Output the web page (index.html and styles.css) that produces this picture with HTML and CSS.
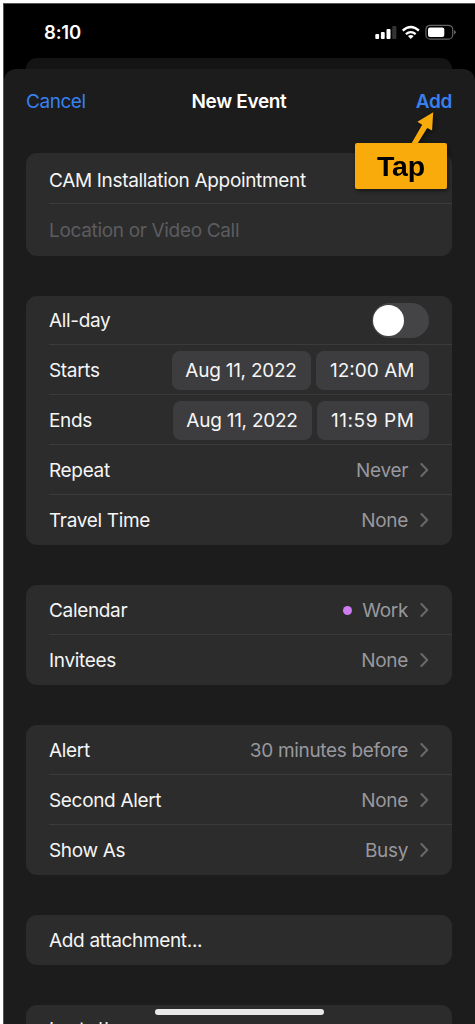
FILE: index.html
```html
<!DOCTYPE html>
<html lang="en">
<head>
<meta charset="utf-8">
<title>New Event</title>
<link rel="stylesheet" href="styles.css">
</head>
<body>
<main class="phone">
  <header class="status">
    <span class="time">8:10</span>
    <svg class="status-icons" width="82" height="18" viewBox="0 0 82 18">
      <g fill="#fff">
        <rect x="0.3" y="10" width="3.8" height="5" rx="1"/>
        <rect x="5.9" y="8" width="3.8" height="7" rx="1"/>
        <rect x="11.5" y="5" width="4" height="10" rx="1"/>
        <rect x="17.2" y="2" width="4.2" height="13" rx="1" fill="#333335"/>
        <path d="M35.8 15 L32.9 12.1 Q35.8 9.9 38.7 12.1 Z"/>
      </g>
      <g fill="none" stroke="#fff" stroke-width="2.3">
        <path d="M30.9 10.2 Q35.8 6 40.7 10.2"/>
        <path d="M27.7 6.7 Q35.8 -.8 43.9 6.7"/>
      </g>
      <rect x="50.9" y="1.3" width="26.8" height="13.8" rx="4.2" fill="none" stroke="#656567" stroke-width="1.2"/>
      <rect x="53" y="3.4" width="16.3" height="9.6" rx="2" fill="#fff"/>
      <path d="M79 5.9 Q80.8 6.6 80.8 8.2 T79 10.5 Z" fill="#656567"/>
    </svg>
  </header>
  <div class="sheet-behind"></div>
  <section class="sheet">
    <nav class="nav">
      <span class="link cancel">Cancel</span>
      <span class="title">New Event</span>
      <span class="link add">Add</span>
      <div class="callout">
        <svg class="arrow" width="30" height="38" viewBox="0 0 30 38"><path d="M23.2 .3 L7.4 9.8 L12.2 12.8 L0 34 L6 34 L17.2 15.9 L22.1 18.6 Z" fill="#f9ab0b"/></svg>
        <div class="tap"><span>Tap</span></div>
      </div>
    </nav>

    <div class="group g-title">
      <div class="row"><span>CAM Installation Appointment</span></div>
      <div class="row location"><span class="placeholder">Location or Video Call</span></div>
    </div>

    <div class="group g-time">
      <div class="row"><span>All-day</span><span class="toggle"><i class="knob"></i></span></div>
      <div class="row"><span>Starts</span><span class="pills"><b class="pill date">Aug 11, 2022</b><b class="pill hour">12:00 AM</b></span></div>
      <div class="row"><span>Ends</span><span class="pills"><b class="pill date">Aug 11, 2022</b><b class="pill hour late">11:59 PM</b></span></div>
      <div class="row"><span>Repeat</span><span class="value">Never<svg class="chev" width="9" height="16" viewBox="0 0 9 16"><path d="M1.4 2 L7.2 8 L1.4 14"/></svg></span></div>
      <div class="row"><span>Travel Time</span><span class="value">None<svg class="chev" width="9" height="16" viewBox="0 0 9 16"><path d="M1.4 2 L7.2 8 L1.4 14"/></svg></span></div>
    </div>

    <div class="group">
      <div class="row"><span>Calendar</span><span class="value"><i class="dot"></i>Work<svg class="chev" width="9" height="16" viewBox="0 0 9 16"><path d="M1.4 2 L7.2 8 L1.4 14"/></svg></span></div>
      <div class="row"><span>Invitees</span><span class="value">None<svg class="chev" width="9" height="16" viewBox="0 0 9 16"><path d="M1.4 2 L7.2 8 L1.4 14"/></svg></span></div>
    </div>

    <div class="group">
      <div class="row"><span>Alert</span><span class="value">30 minutes before<svg class="chev" width="9" height="16" viewBox="0 0 9 16"><path d="M1.4 2 L7.2 8 L1.4 14"/></svg></span></div>
      <div class="row"><span>Second Alert</span><span class="value">None<svg class="chev" width="9" height="16" viewBox="0 0 9 16"><path d="M1.4 2 L7.2 8 L1.4 14"/></svg></span></div>
      <div class="row"><span>Show As</span><span class="value">Busy<svg class="chev" width="9" height="16" viewBox="0 0 9 16"><path d="M1.4 2 L7.2 8 L1.4 14"/></svg></span></div>
    </div>

    <div class="group">
      <div class="row"><span>Add attachment...</span></div>
    </div>

    <div class="group notes">
      <div class="row"><span>Install</span></div>
    </div>
  </section>
  <div class="home-bar"></div>
</main>
</body>
</html>
```
FILE: styles.css
```css
* { box-sizing: border-box; }
body {
  margin: 0;
  width: 475px;
  height: 1024px;
  padding: 3px 0 0 3px;
  overflow: hidden;
  background: #fff;
  font-family: Inter, "Liberation Sans", sans-serif;
  font-size: 19px;
  letter-spacing: -0.33px;
  color: #f5f5f5;
}
.phone {
  position: relative;
  height: 1021px;
  overflow: hidden;
  background: #000;
  border-top: 1px solid #555;
  border-left: 1px solid #555;
}
.status {
  height: 54px;
  padding: 17px 18px 0 40px;
  display: flex;
  justify-content: space-between;
  align-items: flex-start;
}
.time { font-size: 18.5px; font-weight: 600; line-height: 22px; color: #fff; letter-spacing: -0.2px; }
.status-icons { margin-top: 3px; }
.sheet-behind {
  height: 12px;
  margin: 0 23px 0 22px;
  border-radius: 11px 11px 0 0;
  background: #141414;
}
.sheet {
  height: 960px;
  margin-top: -1px;
  padding: 0 23px 0 22px;
  border-radius: 12px 12px 0 0;
  background: #1c1c1c;
}
.nav {
  position: relative;
  height: 84px;
  padding-top: 20px;
  display: grid;
  grid-template-columns: 1fr auto 1fr;
  line-height: 26px;
}
.link { color: #3880f0; }
.cancel { letter-spacing: -0.45px; }
.title { font-weight: 600; color: #fff; }
.add { font-weight: 600; text-align: right; }
.callout { position: absolute; left: 329px; top: 43px; width: 92px; filter: drop-shadow(1px 2px 2px rgba(0, 0, 0, .5)); }
.arrow { display: block; margin: 0 0 -7px 55px; }
.tap {
  height: 46px;
  border-radius: 2px;
  background: #f9ab0b;
  color: #000;
  font: bold 28.5px/47px "Liberation Sans", sans-serif;
  letter-spacing: -0.2px;
  text-align: center;
}
.group { margin-bottom: 40px; border-radius: 11px; background: #2c2c2c; }
.row {
  position: relative;
  height: 50px;
  padding: 1px 23px 0;
  display: flex;
  align-items: center;
  justify-content: space-between;
}
.row + .row::before {
  content: "";
  position: absolute;
  left: 23px;
  right: 0;
  top: -1px;
  height: 1px;
  background: #3b3b3d;
}
.g-title .row { height: 51.3px; padding-top: 3px; }
.g-title .location { padding-top: 1px; }
.g-time .row { height: 49.8px; }
.placeholder { color: #5c5c60; }
.value { display: flex; align-items: center; color: #98989e; }
.chev { margin-left: 12px; fill: none; stroke: #6a6a6e; stroke-width: 2; stroke-linecap: round; stroke-linejoin: round; }
.dot { width: 9px; height: 9px; margin-right: 10px; border-radius: 50%; background: #cf7cf0; }
.toggle { width: 57px; height: 35px; padding: 2px 1px; border-radius: 18px; background: #444446; }
.knob { display: block; width: 31px; height: 31px; border-radius: 50%; background: #fff; }
.pills { display: flex; gap: 5px; }
.pill {
  height: 39px;
  border-radius: 8px;
  background: #3d3d3f;
  font-weight: 400;
  line-height: 39px;
  text-align: center;
  white-space: nowrap;
}
.date { width: 139px; letter-spacing: -0.25px; }
.hour { width: 113.5px; letter-spacing: 0; }
.late { width: 112.5px; letter-spacing: 0.6px; }
.notes .row { padding-top: 0; letter-spacing: 1.2px; }
.home-bar {
  position: absolute;
  left: 151px;
  bottom: 9px;
  width: 169px;
  height: 6px;
  border-radius: 3px;
  background: #e8e8e8;
}
```
